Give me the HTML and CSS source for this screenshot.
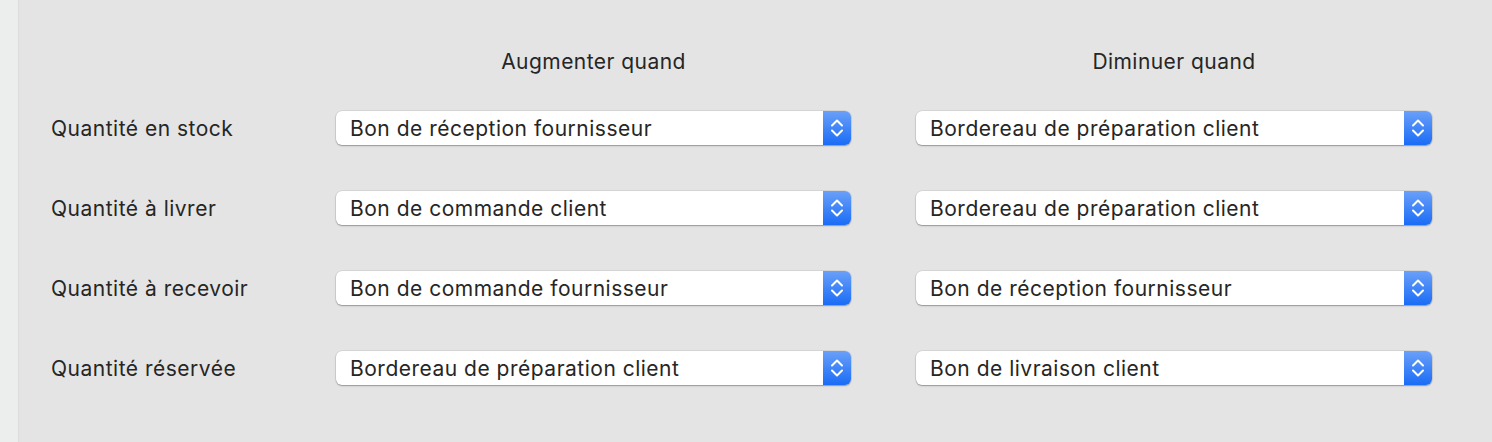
FILE: index.html
```html
<!DOCTYPE html>
<html lang="fr">
<head>
<meta charset="utf-8">
<link rel="stylesheet" href="styles.css">
</head>
<body>
<div class="window">
  <div class="sidebar"></div>
  <div class="main">
    <div class="grid">
      <div></div>
      <div class="head">Augmenter quand</div>
      <div class="head">Diminuer quand</div>

      <div class="label">Quantité en stock</div>
      <div class="popup"><span class="value">Bon de réception fournisseur</span><span class="arrows"><svg width="16" height="22" viewBox="0 0 16 22"><path d="M3 8.5 L8 3.5 L13 8.5 M3 13.5 L8 18.5 L13 13.5" fill="none" stroke="#fff" stroke-width="2" stroke-linecap="round" stroke-linejoin="round"/></svg></span></div>
      <div class="popup"><span class="value">Bordereau de préparation client</span><span class="arrows"><svg width="16" height="22" viewBox="0 0 16 22"><path d="M3 8.5 L8 3.5 L13 8.5 M3 13.5 L8 18.5 L13 13.5" fill="none" stroke="#fff" stroke-width="2" stroke-linecap="round" stroke-linejoin="round"/></svg></span></div>

      <div class="label">Quantité à livrer</div>
      <div class="popup"><span class="value">Bon de commande client</span><span class="arrows"><svg width="16" height="22" viewBox="0 0 16 22"><path d="M3 8.5 L8 3.5 L13 8.5 M3 13.5 L8 18.5 L13 13.5" fill="none" stroke="#fff" stroke-width="2" stroke-linecap="round" stroke-linejoin="round"/></svg></span></div>
      <div class="popup"><span class="value">Bordereau de préparation client</span><span class="arrows"><svg width="16" height="22" viewBox="0 0 16 22"><path d="M3 8.5 L8 3.5 L13 8.5 M3 13.5 L8 18.5 L13 13.5" fill="none" stroke="#fff" stroke-width="2" stroke-linecap="round" stroke-linejoin="round"/></svg></span></div>

      <div class="label">Quantité à recevoir</div>
      <div class="popup"><span class="value">Bon de commande fournisseur</span><span class="arrows"><svg width="16" height="22" viewBox="0 0 16 22"><path d="M3 8.5 L8 3.5 L13 8.5 M3 13.5 L8 18.5 L13 13.5" fill="none" stroke="#fff" stroke-width="2" stroke-linecap="round" stroke-linejoin="round"/></svg></span></div>
      <div class="popup"><span class="value">Bon de réception fournisseur</span><span class="arrows"><svg width="16" height="22" viewBox="0 0 16 22"><path d="M3 8.5 L8 3.5 L13 8.5 M3 13.5 L8 18.5 L13 13.5" fill="none" stroke="#fff" stroke-width="2" stroke-linecap="round" stroke-linejoin="round"/></svg></span></div>

      <div class="label">Quantité réservée</div>
      <div class="popup"><span class="value">Bordereau de préparation client</span><span class="arrows"><svg width="16" height="22" viewBox="0 0 16 22"><path d="M3 8.5 L8 3.5 L13 8.5 M3 13.5 L8 18.5 L13 13.5" fill="none" stroke="#fff" stroke-width="2" stroke-linecap="round" stroke-linejoin="round"/></svg></span></div>
      <div class="popup"><span class="value">Bon de livraison client</span><span class="arrows"><svg width="16" height="22" viewBox="0 0 16 22"><path d="M3 8.5 L8 3.5 L13 8.5 M3 13.5 L8 18.5 L13 13.5" fill="none" stroke="#fff" stroke-width="2" stroke-linecap="round" stroke-linejoin="round"/></svg></span></div>
    </div>
  </div>
</div>
</body>
</html>
```

FILE: styles.css
```css
* { box-sizing: border-box; }
html, body { margin: 0; padding: 0; }
body {
  font-family: Inter, "Liberation Sans", sans-serif;
  color: #262626;
  background: #e4e4e4;
}
.window {
  display: flex;
  width: 1492px;
  height: 442px;
  overflow: hidden;
}
.sidebar {
  width: 19px;
  flex: none;
  background: #eceeed;
  border-right: 1px solid #dcdcdc;
}
.main {
  flex: 1;
  background: #e4e4e4;
  padding: 50px 0 0 32px;
}
.grid {
  display: grid;
  grid-template-columns: 220px 515px 516px;
  column-gap: 65px;
  row-gap: 46px;
  align-items: center;
}
.grid > .head {
  text-align: center;
  font-size: 21px;
  line-height: 24px;
  letter-spacing: 0.45px;
  margin-bottom: -9px;
}
.label {
  font-size: 21px;
  line-height: 24px;
  letter-spacing: 0.5px;
  padding-top: 2px;
}
.popup {
  display: flex;
  height: 34px;
  background: #fff;
  border-radius: 6px;
  box-shadow: 0 0 0 0.5px rgba(0,0,0,0.12), 0 1px 1.5px rgba(0,0,0,0.3);
  overflow: hidden;
}
.value {
  flex: 1;
  font-size: 21px;
  line-height: 34px;
  letter-spacing: 0.5px;
  padding: 1px 0 0 14px;
  white-space: nowrap;
}
.arrows {
  width: 28px;
  flex: none;
  display: flex;
  align-items: center;
  justify-content: center;
  background: linear-gradient(#6aa0f8, #1a6cf6);
}
```
